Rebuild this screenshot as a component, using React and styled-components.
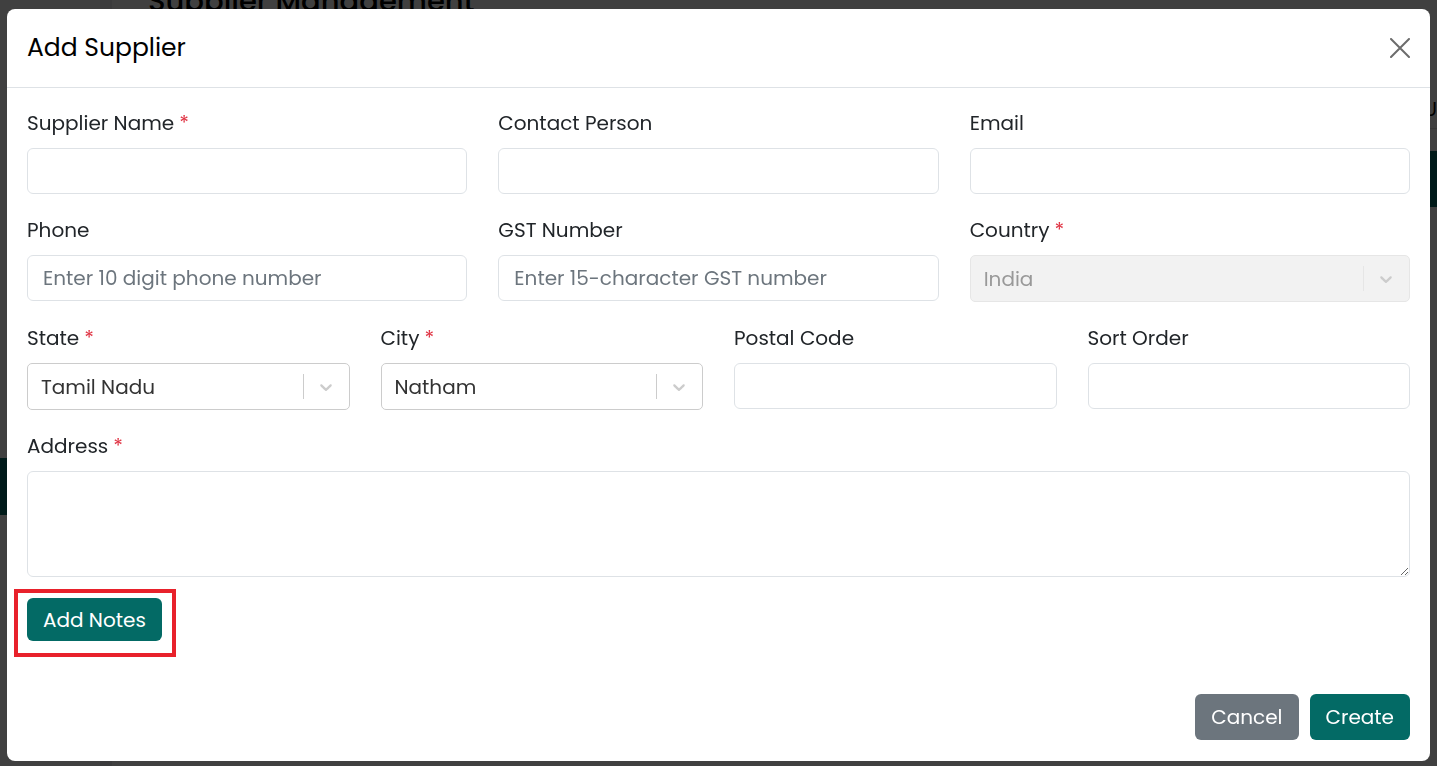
import React from 'react';
import styled, { createGlobalStyle } from 'styled-components';

const FONT = `Poppins, "Noto Sans", "DejaVu Sans", sans-serif`;
const TEAL = '#036a65';

const GlobalStyle = createGlobalStyle`
    html, body {
        margin: 0;
        height: 100%;
        overflow: hidden;
    }
    body {
        font-family: ${FONT};
        color: #212529;
    }
    * {
        box-sizing: border-box;
    }
`;

// Page under the dialog

const Page = styled.div`
    display: grid;
    grid-template-columns: 100px 12px 1fr;
    height: 100vh;
    background: #fff;
`;

const Sidebar = styled.aside`
    display: flex;
    flex-direction: column;
    padding-top: 458px;
    background: #fff;
`;

const SideItem = styled.div`
    height: 57px;
    background: ${TEAL};
`;

const SideLabel = styled.div`
    padding: 20px 0 0 0;
    font-size: 22px;
    color: #000;
    text-indent: -12px;
`;

const Gutter = styled.div`
    background: #e9ecef;
`;

const Main = styled.main`
    display: flex;
    flex-direction: column;
    padding: 0 0 0 36px;
`;

const PageTitle = styled.h1`
    margin: -20px 0 0;
    font-size: 29px;
    font-weight: 500;
    color: #000;
`;

const Toolbar = styled.div`
    display: flex;
    justify-content: flex-end;
    align-items: flex-end;
    height: 60px;
    margin-top: 46px;
    padding-bottom: 4px;
    border-bottom: 1px solid #ddd;
    font-size: 20px;
    color: #000;
`;

const TableHead = styled.div`
    height: 56px;
    margin-top: 22px;
    background: ${TEAL};
`;

// Dialog

const Backdrop = styled.div`
    position: fixed;
    inset: 0;
    display: flex;
    align-items: flex-start;
    justify-content: flex-start;
    padding: 9px 0 0 7px;
    background: rgba(0, 0, 0, 0.75);
`;

const Modal = styled.div`
    display: flex;
    flex-direction: column;
    width: 1423px;
    height: 752px;
    background: #fff;
    border-radius: 8px;
`;

const Header = styled.div`
    display: flex;
    align-items: center;
    justify-content: space-between;
    height: 79px;
    padding: 0 20px;
    border-bottom: 1px solid #dee2e6;
`;

const Title = styled.h2`
    margin: 0;
    font-size: 25px;
    font-weight: 400;
    color: #000;
`;

const CloseButton = styled.button`
    display: flex;
    padding: 0;
    border: 0;
    background: none;
    color: #6c6c6c;
    cursor: pointer;
`;

const Body = styled.div`
    display: flex;
    flex-direction: column;
    gap: 24px;
    flex: 1;
    padding: 23px 20px 0;
`;

const Row = styled.div`
    display: grid;
    grid-template-columns: repeat(${(p) => p.cols}, minmax(0, 1fr));
    column-gap: 31px;
`;

const Field = styled.div`
    display: flex;
    flex-direction: column;
    min-width: 0;
`;

const Label = styled.label`
    height: 24px;
    margin-bottom: 13px;
    font-size: 20px;
    line-height: 24px;
    color: #212529;
`;

const Required = styled.span`
    margin-left: 5px;
    color: #e03444;
`;

const Input = styled.input`
    width: 100%;
    height: 46px;
    padding: 0 15px;
    border: 1px solid #dee2e6;
    border-radius: 6px;
    font-family: ${FONT};
    font-size: 20px;
    color: #212529;
    outline: none;

    &::placeholder {
        color: #6c757d;
    }
`;

const TextArea = styled.textarea`
    width: 100%;
    height: 106px;
    padding: 8px 15px;
    border: 1px solid #dee2e6;
    border-radius: 6px;
    font-family: ${FONT};
    font-size: 20px;
    outline: none;
`;

const SelectControl = styled.div`
    display: flex;
    align-items: center;
    height: 47px;
    padding-left: 13px;
    border: 1px solid ${(p) => (p.disabled ? '#e6e6e6' : '#ccc')};
    border-radius: 5px;
    background: ${(p) => (p.disabled ? '#f2f2f2' : '#fff')};
    font-size: 20px;
    color: ${(p) => (p.disabled ? '#999' : '#333')};
`;

const SelectValue = styled.div`
    flex: 1;
    min-width: 0;
    white-space: nowrap;
`;

const Separator = styled.span`
    align-self: stretch;
    width: 1px;
    margin: 10px 0;
    background: ${(p) => (p.disabled ? '#e6e6e6' : '#ccc')};
`;

const Indicator = styled.span`
    display: flex;
    padding: 0 13px 0 12px;
    color: #ccc;
`;

const NotesWrap = styled.div`
    position: relative;
    align-self: flex-start;
    margin-top: -3px;

    &::after {
        content: '';
        position: absolute;
        top: -9px;
        left: -13px;
        right: -14px;
        bottom: -16px;
        border: 4px solid #e8212b;
        pointer-events: none;
    }
`;

const Button = styled.button`
    height: ${(p) => p.h || 46}px;
    padding: 0 16px;
    border: 0;
    border-radius: 6px;
    background: ${(p) => (p.variant === 'secondary' ? '#6c757d' : TEAL)};
    color: #fff;
    font-family: ${FONT};
    font-size: 20px;
    cursor: pointer;
`;

const Footer = styled.div`
    display: flex;
    justify-content: flex-end;
    gap: 11px;
    padding: 0 20px 21px;
`;

function Chevron() {
    return (
        <svg width="20" height="20" viewBox="0 0 20 20" fill="currentColor" aria-hidden="true">
            <path d="M4.516 7.548c0.436-0.446 1.043-0.481 1.576 0l3.908 3.747 3.908-3.747c0.533-0.481 1.141-0.446 1.574 0 0.436 0.445 0.408 1.197 0 1.615-0.406 0.418-4.695 4.502-4.695 4.502-0.217 0.223-0.502 0.335-0.787 0.335s-0.57-0.112-0.789-0.335c0 0-4.287-4.084-4.695-4.502s-0.436-1.17 0-1.615z" />
        </svg>
    );
}

function Select({ value, disabled }) {
    return (
        <SelectControl disabled={disabled}>
            <SelectValue>{value}</SelectValue>
            <Separator disabled={disabled} />
            <Indicator>
                <Chevron />
            </Indicator>
        </SelectControl>
    );
}

function FormField({ label, required, children }) {
    return (
        <Field>
            <Label>
                {label}
                {required && <Required>*</Required>}
            </Label>
            {children}
        </Field>
    );
}

export default function App() {
    return (
        <>
            <GlobalStyle />
            <Page>
                <Sidebar>
                    <SideItem />
                    <SideLabel>r</SideLabel>
                </Sidebar>
                <Gutter />
                <Main>
                    <PageTitle>Supplier Management</PageTitle>
                    <Toolbar>U</Toolbar>
                    <TableHead />
                </Main>
            </Page>

            <Backdrop>
                <Modal>
                    <Header>
                        <Title>Add Supplier</Title>
                        <CloseButton aria-label="Close">
                            <svg width="20" height="20" viewBox="0 0 20 20" fill="none" stroke="currentColor" strokeWidth="2" strokeLinecap="round">
                                <path d="M1 1L19 19M19 1L1 19" />
                            </svg>
                        </CloseButton>
                    </Header>

                    <Body>
                        <Row cols={3}>
                            <FormField label="Supplier Name" required>
                                <Input />
                            </FormField>
                            <FormField label="Contact Person">
                                <Input />
                            </FormField>
                            <FormField label="Email">
                                <Input type="email" />
                            </FormField>
                        </Row>

                        <Row cols={3}>
                            <FormField label="Phone">
                                <Input placeholder="Enter 10 digit phone number" />
                            </FormField>
                            <FormField label="GST Number">
                                <Input placeholder="Enter 15-character GST number" />
                            </FormField>
                            <FormField label="Country" required>
                                <Select value="India" disabled />
                            </FormField>
                        </Row>

                        <Row cols={4}>
                            <FormField label="State" required>
                                <Select value="Tamil Nadu" />
                            </FormField>
                            <FormField label="City" required>
                                <Select value="Natham" />
                            </FormField>
                            <FormField label="Postal Code">
                                <Input />
                            </FormField>
                            <FormField label="Sort Order">
                                <Input type="number" />
                            </FormField>
                        </Row>

                        <Row cols={1}>
                            <FormField label="Address" required>
                                <TextArea />
                            </FormField>
                        </Row>

                        <NotesWrap>
                            <Button h={43}>Add Notes</Button>
                        </NotesWrap>
                    </Body>

                    <Footer>
                        <Button variant="secondary">Cancel</Button>
                        <Button>Create</Button>
                    </Footer>
                </Modal>
            </Backdrop>
        </>
    );
}
